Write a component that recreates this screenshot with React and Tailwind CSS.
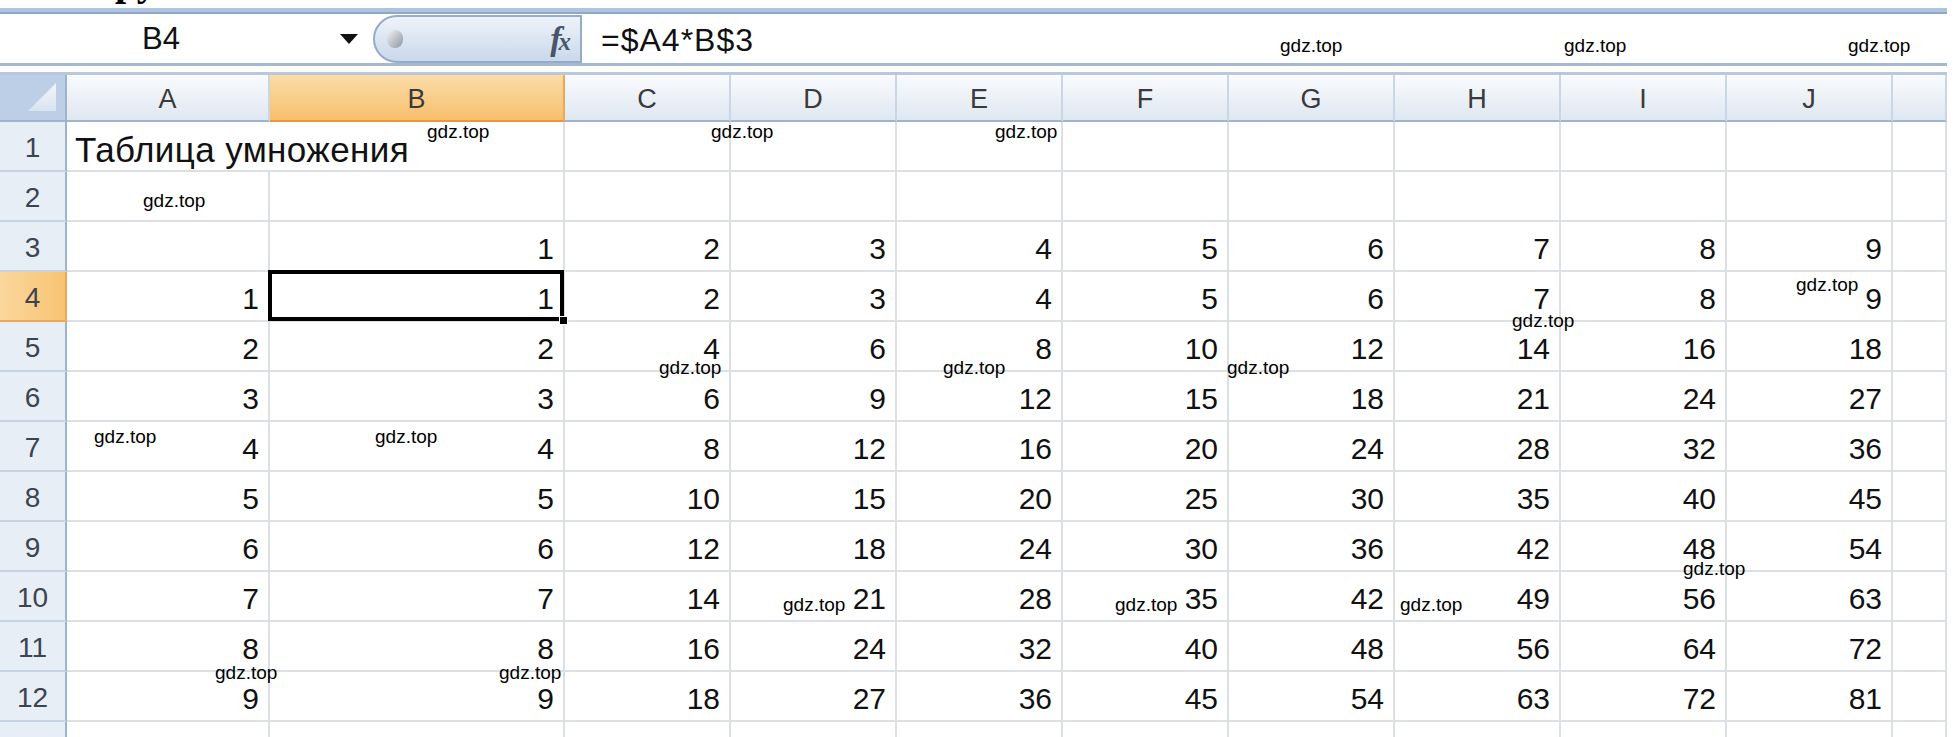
import React from 'react'

const COLS = ['A', 'B', 'C', 'D', 'E', 'F', 'G', 'H', 'I', 'J', '']
const ROWS = [1, 2, 3, 4, 5, 6, 7, 8, 9, 10, 11, 12, 13]

// водяные знаки поверх листа
const MARKS = [
  [1280, 36], [1564, 36], [1848, 36],
  [427, 122], [711, 122], [995, 122],
  [143, 191],
  [1796, 275], [1512, 311],
  [659, 358], [943, 358], [1227, 358],
  [94, 427], [375, 427],
  [1683, 559],
  [783, 595], [1115, 595], [1400, 595],
  [215, 663], [499, 663],
]

const cellValue = (r, c) => {
  if (r === 3 && c >= 1 && c <= 9) return c
  if (r >= 4 && r <= 12) {
    const i = r - 3
    if (c === 0) return i
    if (c <= 9) return i * c
  }
  return null
}

const Corner = () => (
  <div className="bg-[#bccfe7] border-r-2 border-b-2 border-[#9db4cf] relative">
    <svg className="absolute right-[9px] bottom-[9px]" width="28" height="28" viewBox="0 0 28 28">
      <defs>
        <linearGradient id="tri" x1="0" y1="0" x2="0" y2="1">
          <stop offset="0" stopColor="#f2f6fb" />
          <stop offset="1" stopColor="#d8e3f0" />
        </linearGradient>
      </defs>
      <polygon points="28,0 28,28 0,28" fill="url(#tri)" />
    </svg>
  </div>
)

const FormulaBar = () => (
  <div className="h-[49px] flex bg-white">
    <div className="w-[373px] relative">
      <span className="absolute left-[142px] top-[8px] text-[31px] leading-[34px] text-[#111]">B4</span>
      <span className="absolute left-[340px] top-[20px] w-0 h-0 border-l-[9px] border-r-[9px] border-t-[10px] border-l-transparent border-r-transparent border-t-[#111]" />
    </div>
    <div className="w-[209px] mt-[1px] rounded-l-[26px] border-2 border-[#95abc8] bg-gradient-to-b from-[#eef3fa] to-[#c9d8eb] flex items-center justify-between pl-[12px] pr-[12px]">
      <span className="w-[16px] h-[18px] rounded-full bg-gradient-to-br from-[#f4f4f4] to-[#8d96a3]" />
      <span className="font-['Liberation_Serif'] italic font-bold text-[34px] leading-none text-[#4a5668] tracking-[-3px]">
        f<span className="text-[25px]">x</span>
      </span>
    </div>
    <div className="flex-1 flex items-center pl-[19px] pt-[2px]">
      <span className="text-[32px] leading-none tracking-[1px] text-[#111]">=$A4*B$3</span>
    </div>
  </div>
)

export default function App() {
  return (
    <div className="w-[1956px] h-[737px] overflow-hidden bg-white relative font-['Liberation_Sans',sans-serif]">
      <div className="w-[1947px]">
        <div className="h-[8px] relative overflow-hidden">
          <span className="absolute left-[92px] top-[-38px] font-['Liberation_Serif',serif] font-bold text-[40px] leading-[40px] text-black">
            Группы
          </span>
        </div>
        <div className="h-[6px] bg-[#aec4de] border-b-2 border-[#8ea8c8]" />
        <FormulaBar />
        <div className="h-[12px] border-t-[3px] border-b-[3px] border-t-[#a4b8cf] border-b-[#b8c9dd] bg-white" />

        <div className="grid grid-cols-[67px_203px_295px_166px_166px_166px_166px_166px_166px_166px_166px_54px] grid-rows-[47px_repeat(13,50px)]">
          <Corner />
          {COLS.map((l, c) => (
            <div
              key={c}
              className={
                c === 1
                  ? 'flex items-center justify-center border-r-2 border-b-2 border-r-[#f0a74e] border-b-[#f29536] bg-gradient-to-b from-[#fbdca8] to-[#f6bf6c] text-[27px] text-[#3a3a3a] pt-[3px]'
                  : 'flex items-center justify-center border-r-2 border-b-2 border-r-[#c9d6e6] border-b-[#9db4cf] bg-gradient-to-b from-[#f9fbfd] to-[#dfe7f1] text-[27px] text-[#3a3a3a] pt-[3px]'
              }
            >
              {l}
            </div>
          ))}

          {ROWS.map((r) => (
            <React.Fragment key={r}>
              <div
                className={
                  r === 4
                    ? 'flex items-center justify-center border-r-2 border-b-2 border-r-[#f0a74e] border-b-[#f0a74e] bg-gradient-to-r from-[#fbd79d] to-[#f7c372] text-[28px] text-[#3c4450] pt-[4px]'
                    : 'flex items-center justify-center border-r-2 border-b-2 border-r-[#9db4cf] border-b-[#c8d4e3] bg-[#e8eef6] text-[28px] text-[#3c4450] pt-[4px]'
                }
              >
                {r}
              </div>
              {COLS.map((_, c) => {
                const v = cellValue(r, c)
                const isTitle = r === 1 && c === 0
                const isActive = r === 4 && c === 1
                return (
                  <div
                    key={c}
                    className={
                      isTitle
                        ? 'relative z-10 flex items-center border-b-2 border-[#dcdfe4] pl-[8px] pt-[6px]'
                        : isActive
                        ? 'relative z-10 flex items-center justify-end border-r-2 border-b-2 border-[#dcdfe4] pr-[9px] pt-[5px]'
                        : 'flex items-center justify-end border-r-2 border-b-2 border-[#dcdfe4] pr-[9px] pt-[5px]'
                    }
                  >
                    {isTitle && (
                      <span className="whitespace-nowrap text-[35px] leading-none tracking-[0.4px] text-[#111]">Таблица умножения</span>
                    )}
                    {v !== null && <span className="text-[30px] leading-none text-[#111]">{v}</span>}
                    {isActive && (
                      <>
                        <span className="absolute -left-[2px] -top-[2px] -right-[1px] -bottom-[1px] border-[4px] border-black pointer-events-none" />
                        <span className="absolute -right-[5px] -bottom-[5px] w-[9px] h-[9px] bg-black border border-white" />
                      </>
                    )}
                  </div>
                )
              })}
            </React.Fragment>
          ))}
        </div>
      </div>

      {MARKS.map(([x, y], i) => (
        <span
          key={i}
          className="absolute z-20 text-[19px] leading-[19px] text-black whitespace-nowrap"
          style={{ left: x, top: y }}
        >
          gdz.top
        </span>
      ))}
    </div>
  )
}
